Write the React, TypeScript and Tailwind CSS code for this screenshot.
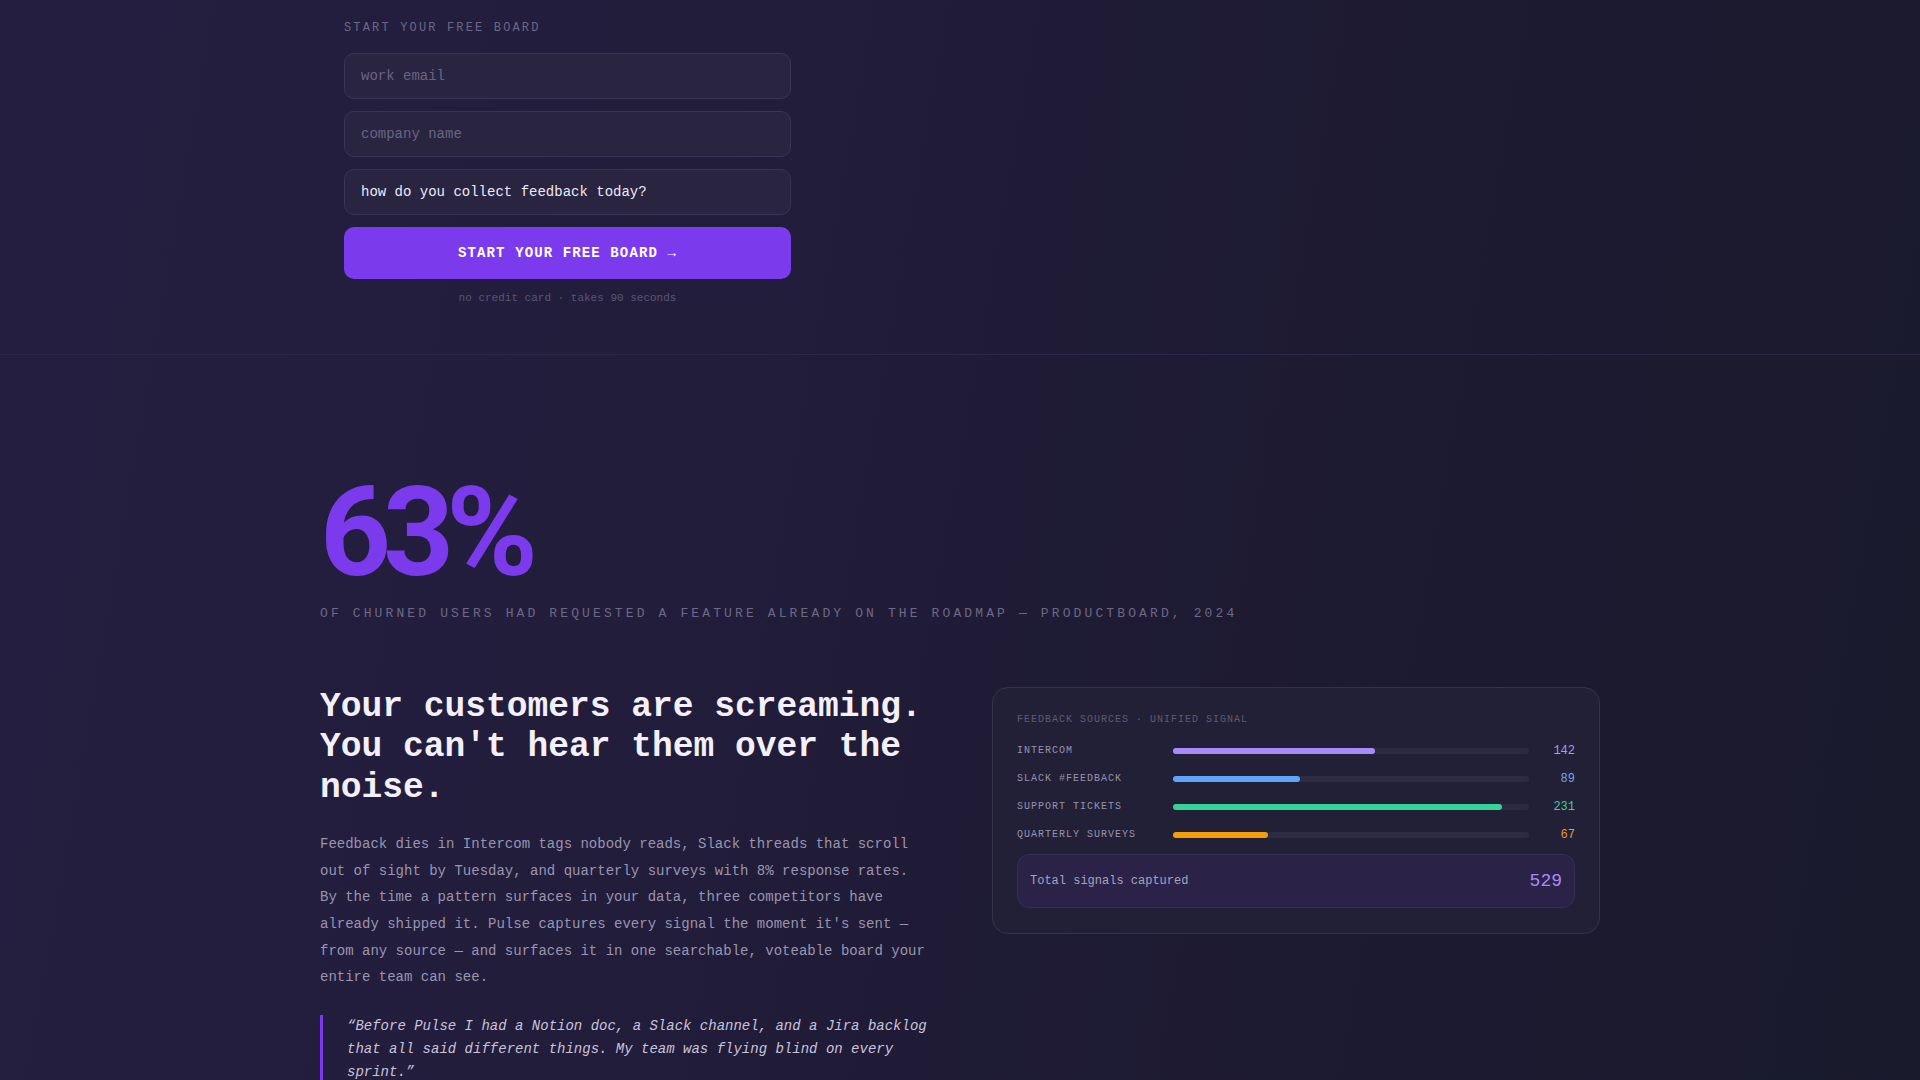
import React from "react";

const rows = [
  { label: "INTERCOM", value: 142, bar: "bg-[#a78bfa]", text: "text-[#a99af0]" },
  { label: "SLACK #FEEDBACK", value: 89, bar: "bg-[#60a5fa]", text: "text-[#74a6ee]" },
  { label: "SUPPORT TICKETS", value: 231, bar: "bg-[#34d399]", text: "text-[#3fcf99]" },
  { label: "QUARTERLY SURVEYS", value: 67, bar: "bg-[#f59e0b]", text: "text-[#e59a2a]" },
];

export default function App() {
  return (
    <div className="min-h-screen w-full bg-[linear-gradient(100deg,#241f40_0%,#221d3b_35%,#1d1a32_65%,#1a1a2d_100%)] font-['Liberation_Mono',monospace]">
      <section className="border-b border-[#2c2747]">
        <div className="mx-auto max-w-[1280px] pt-[20px] pb-[48px]">
          <div className="ml-6 w-[447px]">
            <p className="mb-[17px] text-xs leading-4 tracking-[0.18em] text-[#6c6788]">START YOUR FREE BOARD</p>
            <div className="flex flex-col gap-3">
              <input
                placeholder="work email"
                className="h-[46px] w-full rounded-[10px] border border-[#3a3457] bg-[#29243f] px-4 text-sm text-[#ece9f7] outline-none placeholder:text-[#6a6484]"
              />
              <input
                placeholder="company name"
                className="h-[46px] w-full rounded-[10px] border border-[#3a3457] bg-[#29243f] px-4 text-sm text-[#ece9f7] outline-none placeholder:text-[#6a6484]"
              />
              <div className="flex h-[46px] w-full items-center rounded-[10px] border border-[#3a3457] bg-[#29243f] px-4 text-sm text-[#ece9f7]">
                how do you collect feedback today?
              </div>
              <button className="h-[52px] w-full rounded-[10px] bg-[#7c3aed] text-sm font-bold tracking-[0.08em] text-white">
                START YOUR FREE BOARD →
              </button>
            </div>
            <p className="mt-[11px] text-center text-[11px] leading-4 text-[#5a5575]">no credit card · takes 90 seconds</p>
          </div>
        </div>
      </section>

      <section className="mx-auto max-w-[1280px] pt-[116px] pb-24">
        <div className="font-['Roboto',sans-serif] text-[124px] font-bold leading-none tracking-[-0.065em] text-[#7c3aed]">63%</div>
        <p className="mt-[9px] text-[13px] leading-5 tracking-[0.24em] text-[#6d6887]">
          OF CHURNED USERS HAD REQUESTED A FEATURE ALREADY ON THE ROADMAP — PRODUCTBOARD, 2024
        </p>

        <div className="mt-[63px] grid grid-cols-2 items-start gap-16">
          <div>
            <h2 className="text-[34.6px] font-bold leading-[40.4px] text-[#f3f0fc]">
              Your customers are screaming. You can't hear them over the noise.
            </h2>
            <p className="mt-[23px] text-sm leading-[1.9] text-[#9a95b0]">
              Feedback dies in Intercom tags nobody reads, Slack threads that scroll out of sight by Tuesday, and quarterly
              surveys with 8% response rates. By the time a pattern surfaces in your data, three competitors have already
              shipped it. Pulse captures every signal the moment it's sent — from any source — and surfaces it in one
              searchable, voteable board your entire team can see.
            </p>
            <blockquote className="mt-6 border-l-[3px] border-[#7c3aed] pl-6 pb-4 text-sm italic leading-[23px] text-[#c9c4dd]">
              “Before Pulse I had a Notion doc, a Slack channel, and a Jira backlog that all said different things. My team
              was flying blind on every sprint.”
            </blockquote>
          </div>

          <div className="rounded-2xl border border-[#34314d] bg-[#222036] px-6 pt-[25px] pb-[25px]">
            <p className="mb-[17px] text-[10px] leading-[14px] tracking-[0.1em] text-[#5f5a78]">FEEDBACK SOURCES · UNIFIED SIGNAL</p>
            <div className="flex flex-col gap-3.5">
              {rows.map((r) => (
                <div key={r.label} className="grid grid-cols-[140px_1fr_30px] items-center gap-4">
                  <span className="text-[10px] leading-[14px] tracking-[0.1em] text-[#9893b0]">{r.label}</span>
                  <div className="h-[6px] w-full rounded-full bg-[#2c2b42]">
                    <div className={`h-full rounded-full ${r.bar}`} style={{ width: `${(r.value / 250) * 100}%` }} />
                  </div>
                  <span className={`text-right text-xs leading-[14px] ${r.text}`}>{r.value}</span>
                </div>
              ))}
            </div>
            <div className="mt-3 flex h-[54px] items-center justify-between rounded-xl border border-[#352e57] bg-[#2a2347] px-3">
              <span className="text-xs text-[#a7a2c0]">Total signals captured</span>
              <span className="text-lg text-[#a78bfa]">529</span>
            </div>
          </div>
        </div>
      </section>
    </div>
  );
}
